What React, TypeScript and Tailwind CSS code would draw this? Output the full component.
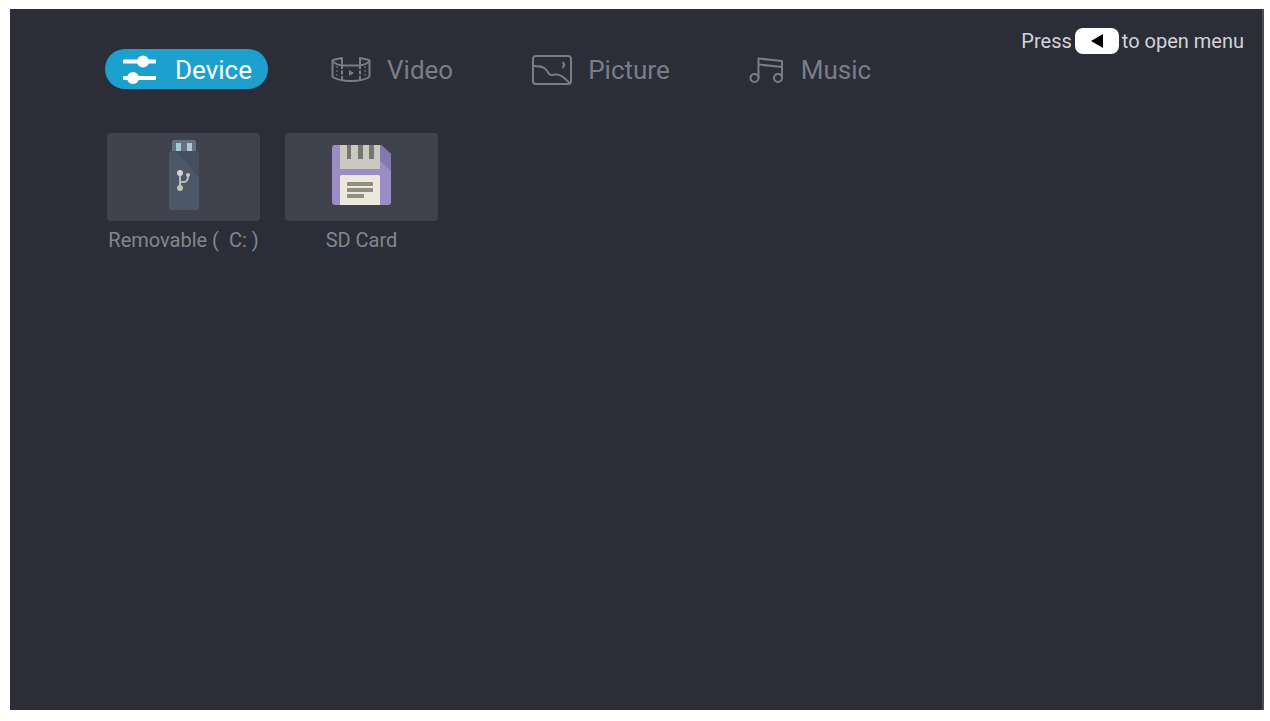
import React, { useState } from 'react';

interface Tab {
  id: string;
  label: string;
  icon: React.ReactNode;
}

interface Drive {
  name: string;
  icon: React.ReactNode;
}

const DeviceIcon = () => (
  <svg width="38" height="32" viewBox="0 0 38 32" fill="currentColor" aria-hidden="true">
    <rect x="2" y="5.500" width="33" height="4" rx="1" />
    <circle cx="22" cy="7.500" r="6" />
    <rect x="2" y="22" width="33" height="4" rx="1" />
    <circle cx="12" cy="24" r="6" />
  </svg>
);

const VideoIcon = () => (
  <svg width="40" height="32" viewBox="0 0 40 32" fill="none" stroke="currentColor" strokeWidth="2" strokeLinejoin="round" aria-hidden="true">
    <path d="M1.500 6v17c5 3 11 4 18.500 4s13.500-1 18.500-4V6" />
    <path d="M1.500 6 11 4v7M38.500 6 29 4v7" />
    <path d="M1.500 7c2 2.500 5 4 10 4.500h17c5-.5 8-2 10-4.500" />
    <path d="M11 11v16M29 11v16" strokeDasharray="4 1.500" />
    <path d="M6 12v13M34 12v13" strokeWidth="1" strokeDasharray="2 2" />
    <path d="M18 16v6l5-3z" fill="currentColor" stroke="none" />
  </svg>
);

const PictureIcon = () => (
  <svg width="40" height="32" viewBox="0 0 40 32" fill="none" stroke="currentColor" strokeWidth="2" strokeLinejoin="round" aria-hidden="true">
    <rect x="1" y="2" width="38" height="28" rx="3" />
    <path d="M1.500 12c5 0 10 0 13 4 2 3 2 5 5 5 4-1 7-1 10 1 3 2 5 4 8 7" />
    <path d="M30.500 8c3 0 3 6 0 6 1-2 1-4 0-6z" fill="currentColor" strokeWidth="1" />
  </svg>
);

const MusicIcon = () => (
  <svg width="36" height="32" viewBox="0 0 36 32" fill="none" stroke="currentColor" strokeWidth="2" strokeLinejoin="round" aria-hidden="true">
    <circle cx="5.500" cy="24" r="4" />
    <circle cx="29" cy="24" r="4" />
    <path d="M9.500 24V4.500L33 7v17" />
    <path d="M9.500 10.500l23.500 2.500" />
  </svg>
);

const UsbIcon = () => (
  <svg width="32" height="72" viewBox="0 0 32 72" aria-hidden="true">
    <rect x="4" y="1" width="24" height="14" rx="2" fill="#687083" />
    <rect x="8" y="4" width="5" height="8" fill="#9fcbd2" />
    <rect x="19" y="4" width="5" height="8" fill="#b3c6d0" />
    <rect x="1" y="12" width="30" height="59" rx="3" fill="#4c5767" />
    <path d="M4 12h24a3 3 0 0 1 3 3v23C25 34 23 24 6 13z" fill="#444e5c" />
    <path d="M12 35v14M12 43h4c3 0 4-2 4-6" stroke="#b9bbbb" strokeWidth="2" fill="none" />
    <circle cx="12" cy="34" r="3" fill="#d0d2d3" />
    <circle cx="20" cy="36" r="2" fill="#c6c8ca" />
    <circle cx="12" cy="49" r="3" fill="#c3c5ae" />
  </svg>
);

const FloppyIcon = () => (
  <svg width="60" height="62" viewBox="0 0 60 62" aria-hidden="true">
    <path d="M3 1h46l10 9v48a3 3 0 0 1-3 3H3a3 3 0 0 1-3-3V4a3 3 0 0 1 3-3z" fill="#9b8cc4" />
    <path d="M48 1h1l10 9v17L48 17z" fill="#8478ad" />
    <rect x="8" y="1" width="40" height="24" fill="#cac9bf" />
    <path d="M15 1h4v14h-4zM26 1h5v14h-5zM37 1h5v14h-5z" fill="#77766c" />
    <path d="M10 31h36a2 2 0 0 1 2 2v28H8V33a2 2 0 0 1 2-2z" fill="#ece9dc" />
    <path d="M15 38h26v4H15zM15 44h26v4H15zM15 50h17v4H15z" fill="#918f83" />
  </svg>
);

const tabs: Tab[] = [
  { id: 'device', label: 'Device', icon: <DeviceIcon /> },
  { id: 'video', label: 'Video', icon: <VideoIcon /> },
  { id: 'picture', label: 'Picture', icon: <PictureIcon /> },
  { id: 'music', label: 'Music', icon: <MusicIcon /> },
];

const drives: Drive[] = [
  { name: 'Removable (  C: )', icon: <UsbIcon /> },
  { name: 'SD Card', icon: <FloppyIcon /> },
];

export default function App() {
  const [activeTab, setActiveTab] = useState('device');

  return (
    <div className="flex min-h-screen bg-white pt-[9px] pr-[6px] pb-[11px] pl-[10px] font-[Roboto,sans-serif]">
      <div className="flex-1 border-r-2 border-[#4b4d58] bg-[#2b2d39] pl-[95px]">
        <header className="flex items-start justify-between pt-[18px] pr-[18px]">
          <nav className="mt-[22px] flex gap-[47px]">
            {tabs.map((tab) => (
              <button
                key={tab.id}
                onClick={() => setActiveTab(tab.id)}
                className={`flex h-10 items-center gap-4 rounded-full px-4 pt-0.5 text-[26px] leading-8 ${
                  activeTab === tab.id ? 'bg-[#1ca1cf] text-white' : 'text-[#7b7d85]'
                }`}
              >
                {tab.icon}
                {tab.label}
              </button>
            ))}
          </nav>

          {/* Menu hint */}
          <div className="flex items-center gap-[3px] text-[20px] leading-7 text-[#d3d4d8]">
            <span>Press</span>
            <kbd className="flex h-[26px] w-11 items-center justify-center rounded-lg bg-white">
              <svg width="14" height="16" viewBox="0 0 14 16" aria-hidden="true">
                <path d="M13 1v14L1 8z" fill="#000" />
              </svg>
            </kbd>
            <span>to open menu</span>
          </div>
        </header>

        {/* Drives */}
        <main className="mt-11 ml-[2px] flex gap-[25px]">
          {drives.map((drive) => (
            <button key={drive.name} className="w-[153px]">
              <span className="flex h-[88px] items-center justify-center rounded-sm bg-[#40424d] pb-1">
                {drive.icon}
              </span>
              <span className="mt-[7px] block text-[20px] leading-6 whitespace-pre text-[#84868d]">{drive.name}</span>
            </button>
          ))}
        </main>
      </div>
    </div>
  );
}
